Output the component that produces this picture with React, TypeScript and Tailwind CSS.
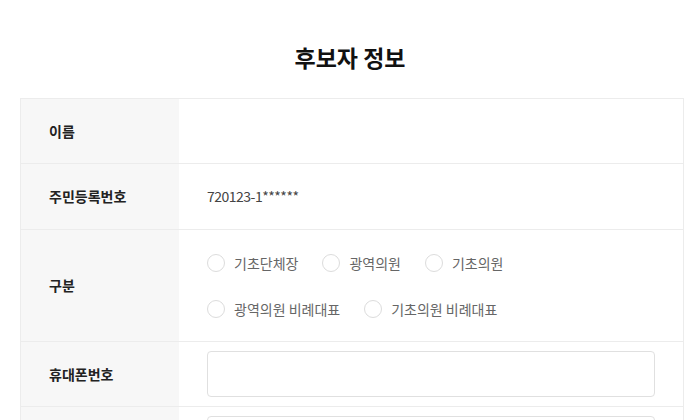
const font = { fontFamily: '"Noto Sans CJK KR", "Noto Sans", sans-serif' };

const Radio = ({ label }: { label: string }) => (
  <label className="flex h-5 items-center gap-[9px] text-[14px] text-[#666]">
    <span className="h-[18px] w-[18px] rounded-full border border-[#dcdcdc] bg-white" />
    <span className="leading-5">{label}</span>
  </label>
);

const Row = ({
  label,
  className,
  children,
}: {
  label: string;
  className: string;
  children?: React.ReactNode;
}) => (
  <div className={`flex border-b border-[#ececec] ${className}`}>
    <div className="flex w-[158px] shrink-0 items-center bg-[#f7f7f7] pl-[28px] text-[14px] font-bold text-[#222]">
      {label}
    </div>
    <div className="flex flex-1 items-center px-[28px]">{children}</div>
  </div>
);

export default function App() {
  return (
    <div className="h-[420px] w-[700px] overflow-hidden bg-white" style={font}>
      <h1 className="pt-[43px] text-center text-[23px] font-bold leading-[28px] text-[#111]">
        후보자 정보
      </h1>
      <div className="ml-[20px] mt-[27px] w-[664px] border border-[#ececec]">
        <Row label="이름" className="h-[65px]" />
        <Row label="주민등록번호" className="h-[66px]">
          <span className="text-[14px] tracking-[-0.5px] text-[#444]">720123-1******</span>
        </Row>
        <Row label="구분" className="h-[112px]">
          <div className="flex flex-col gap-y-[26px]">
            <div className="flex gap-x-[24px]">
              <Radio label="기초단체장" />
              <Radio label="광역의원" />
              <Radio label="기초의원" />
            </div>
            <div className="flex gap-x-[24px]">
              <Radio label="광역의원 비례대표" />
              <Radio label="기초의원 비례대표" />
            </div>
          </div>
        </Row>
        <Row label="휴대폰번호" className="h-[65px]">
          <input className="h-[46px] w-full rounded border border-[#e0e0e0] bg-white px-3 text-[14px] outline-none" />
        </Row>
        <Row label="" className="h-[65px]">
          <input className="h-[46px] w-full rounded border border-[#e0e0e0] bg-white px-3 text-[14px] outline-none" />
        </Row>
      </div>
    </div>
  );
}
